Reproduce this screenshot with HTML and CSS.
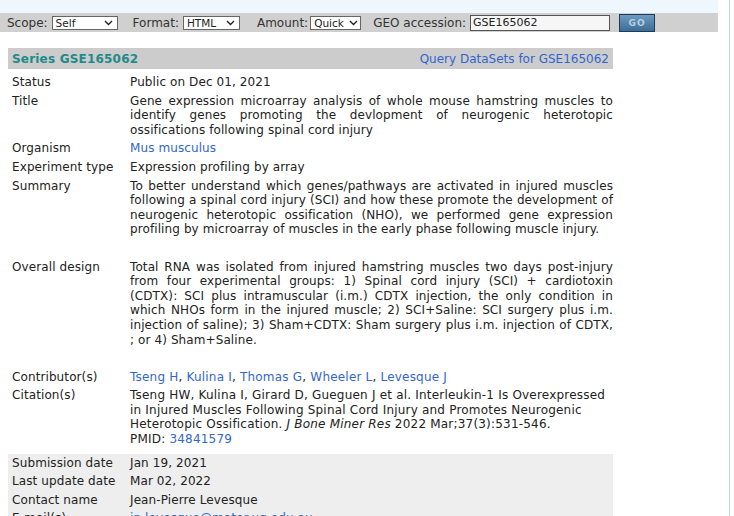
FILE: index.html
```html
<!DOCTYPE html>
<html>
<head>
<meta charset="utf-8">
<link rel="stylesheet" href="styles.css">
</head>
<body>
<div class="frame">
  <div class="main">
    <div class="topband"></div>
    <div class="formbar">
      <span class="flabel">Scope:</span>
      <span class="fsel w-scope"><span>Self</span><svg class="chev" width="9" height="6" viewBox="0 0 9 6"><path d="M1 1 L4.5 4.5 L8 1" fill="none" stroke="#222" stroke-width="1.4"/></svg></span>
      <span class="flabel ml">Format:</span>
      <span class="fsel w-format"><span>HTML</span><svg class="chev" width="9" height="6" viewBox="0 0 9 6"><path d="M1 1 L4.5 4.5 L8 1" fill="none" stroke="#222" stroke-width="1.4"/></svg></span>
      <span class="flabel ml2">Amount:</span>
      <span class="fsel w-amount"><span>Quick</span><svg class="chev" width="9" height="6" viewBox="0 0 9 6"><path d="M1 1 L4.5 4.5 L8 1" fill="none" stroke="#222" stroke-width="1.4"/></svg></span>
      <span class="flabel ml3">GEO accession:</span>
      <span class="finput">GSE165062</span>
      <span class="gobtn">GO</span>
    </div>
    <div class="series">
      <div class="shead">
        <span class="stitle">Series GSE165062</span>
        <a class="lnk" href="#">Query DataSets for GSE165062</a>
      </div>
      <div class="rows">
        <div class="row"><div class="lab">Status</div><div class="val">Public on Dec 01, 2021</div></div>
        <div class="row"><div class="lab">Title</div><div class="val just">Gene expression microarray analysis of whole mouse hamstring muscles to identify genes promoting the devlopment of neurogenic heterotopic ossifications following spinal cord injury</div></div>
        <div class="row"><div class="lab">Organism</div><div class="val"><a class="lnk" href="#">Mus musculus</a></div></div>
        <div class="row"><div class="lab">Experiment type</div><div class="val">Expression profiling by array</div></div>
        <div class="row"><div class="lab">Summary</div><div class="val just">To better understand which genes/pathways are activated in injured muscles following a spinal cord injury (SCI) and how these promote the development of neurogenic heterotopic ossification (NHO), we performed gene expression profiling by microarray of muscles in the early phase following muscle injury.</div></div>
        <div class="spacer"></div>
        <div class="row"><div class="lab">Overall design</div><div class="val just">Total RNA was isolated from injured hamstring muscles two days post-injury from four experimental groups: 1) Spinal cord injury (SCI) + cardiotoxin (CDTX): SCI plus intramuscular (i.m.) CDTX injection, the only condition in which NHOs form in the injured muscle; 2) SCI+Saline: SCI surgery plus i.m. injection of saline); 3) Sham+CDTX: Sham surgery plus i.m. injection of CDTX, ; or 4) Sham+Saline.</div></div>
        <div class="spacer"></div>
        <div class="row wide"><div class="lab">Contributor(s)</div><div class="val"><a class="lnk" href="#">Tseng H</a>, <a class="lnk" href="#">Kulina I</a>, <a class="lnk" href="#">Thomas G</a>, <a class="lnk" href="#">Wheeler L</a>, <a class="lnk" href="#">Levesque J</a></div></div>
        <div class="row wide"><div class="lab">Citation(s)</div><div class="val">Tseng HW, Kulina I, Girard D, Gueguen J et al. Interleukin-1 Is Overexpressed in Injured Muscles Following Spinal Cord Injury and Promotes Neurogenic Heterotopic Ossification. <i>J Bone Miner Res</i> 2022 Mar;37(3):531-546.<br>PMID: <a class="lnk" href="#">34841579</a></div></div>
      </div>
      <div class="rows grey">
        <div class="row"><div class="lab">Submission date</div><div class="val">Jan 19, 2021</div></div>
        <div class="row"><div class="lab">Last update date</div><div class="val">Mar 02, 2022</div></div>
        <div class="row"><div class="lab">Contact name</div><div class="val">Jean-Pierre Levesque</div></div>
        <div class="row"><div class="lab">E-mail(s)</div><div class="val"><a class="lnk" href="#">jp.levesque@mater.uq.edu.au</a></div></div>
      </div>
    </div>
  </div>
  <div class="vline"></div>
</div>
</body>
</html>
```
FILE: styles.css
```css
html, body {
  margin: 0;
  padding: 0;
  background: #ffffff;
  overflow: hidden;
}
body {
  font-family: "DejaVu Sans", Verdana, sans-serif;
  font-size: 12px;
  color: #222222;
}
.frame {
  display: flex;
  height: 516px;
}
.main {
  width: 718px;
  flex: none;
}
.vline {
  margin-left: 11px;
  width: 1px;
  border-left: 1px solid #c4d6ea;
  height: 100%;
}
.topband {
  height: 13px;
  background: #eef7fd;
}
.formbar {
  height: 19px;
  background: #d0d0d0;
  display: flex;
  align-items: center;
  padding-left: 7px;
  font-size: 12px;
  color: #333;
}
.flabel {
  margin-right: 4px;
}
.ml { margin-left: 15px; }
.ml2 { margin-left: 17px; margin-right: 2px; }
.ml3 { margin-left: 12px; }
.fsel {
  box-sizing: border-box;
  height: 14px;
  background: #fff;
  border: 1px solid #666;
  display: flex;
  align-items: center;
  justify-content: space-between;
  padding: 0 4px 0 3px;
  font-size: 10.5px;
  color: #222;
}
.w-scope { width: 66px; }
.w-format { width: 57px; }
.w-amount { width: 51px; padding-right: 2px; }
.finput {
  box-sizing: border-box;
  width: 140px;
  height: 16px;
  border: 1px solid #555;
  background: #f6f6f6;
  font-size: 11px;
  line-height: 14px;
  padding-left: 2px;
  color: #222;
}
.gobtn {
  box-sizing: border-box;
  margin-left: 9px;
  width: 36px;
  height: 18px;
  margin-top: 1px;
  background: linear-gradient(#6d9ac0, #3c6d96);
  border: 1px solid #1e3c58;
  color: #b9cfe1;
  font-size: 9px;
  font-weight: bold;
  letter-spacing: 1px;
  display: flex;
  align-items: center;
  justify-content: center;
}
.series {
  margin: 16px 0 0 8px;
  width: 605px;
}
.shead {
  height: 21px;
  background: #cccccc;
  display: flex;
  justify-content: space-between;
  align-items: center;
  padding: 0 4px;
}
.stitle {
  font-weight: bold;
  font-size: 12px;
  letter-spacing: 0.2px;
  color: #1f8a8a;
}
.lnk {
  color: #3366cc;
  text-decoration: none;
}
.rows {
  margin-top: 4px;
  letter-spacing: 0.1px;
}
.rows.grey {
  margin-top: 5px;
  background: #eeeeee;
}
.row {
  display: grid;
  grid-template-columns: 122px 1fr;
  line-height: 14.6px;
  padding: 2px 0;
}
.row.wide {
  letter-spacing: 0.2px;
}
.lab {
  padding-left: 4px;
  letter-spacing: 0.1px;
}
.just {
  text-align: justify;
}
.spacer {
  height: 18.6px;
}
```
